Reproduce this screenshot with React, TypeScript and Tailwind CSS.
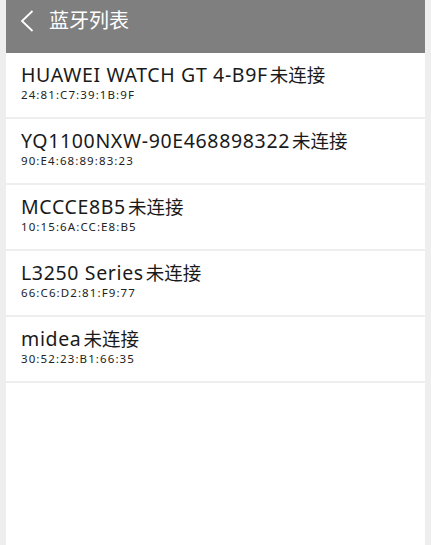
const devices = [
  { name: "HUAWEI WATCH GT 4-B9F", mac: "24:81:C7:39:1B:9F" },
  { name: "YQ1100NXW-90E468898322", mac: "90:E4:68:89:83:23" },
  { name: "MCCCE8B5", mac: "10:15:6A:CC:E8:B5" },
  { name: "L3250 Series", mac: "66:C6:D2:81:F9:77" },
  { name: "midea", mac: "30:52:23:B1:66:35" },
];

const font = { fontFamily: '"Noto Sans", "Noto Sans CJK SC", sans-serif' };

export default function App() {
  return (
    <div className="min-h-[545px] w-[431px] bg-[#eeeeee] px-[6px]" style={font}>
      <div className="flex min-h-[545px] flex-col bg-white">
        <div className="flex h-[53px] items-start bg-[#7f7f7f] pt-[10px]">
          <svg width="14" height="22" viewBox="0 0 14 22" className="ml-[14px]">
            <path d="M12.5 1 L2 11 L12.5 21" fill="none" stroke="white" strokeWidth="1.8" />
          </svg>
          <span className="ml-[15px] text-[20px] leading-[22px] text-white">蓝牙列表</span>
        </div>
        {devices.map((d) => (
          <div key={d.mac} className="flex h-[66px] flex-col border-b-2 border-[#eeeeee] pl-[15px] pt-[10px]">
            <div className="whitespace-nowrap text-[19.5px] leading-[24px] tracking-[0.65px] text-[#1a1a1a]">
              {d.name}
              <span className="ml-[2px] text-[18.5px] tracking-normal">未连接</span>
            </div>
            <div className="mt-[1px] text-[11.5px] leading-[14px] tracking-[1.1px] text-[#222222]">{d.mac}</div>
          </div>
        ))}
      </div>
    </div>
  );
}
